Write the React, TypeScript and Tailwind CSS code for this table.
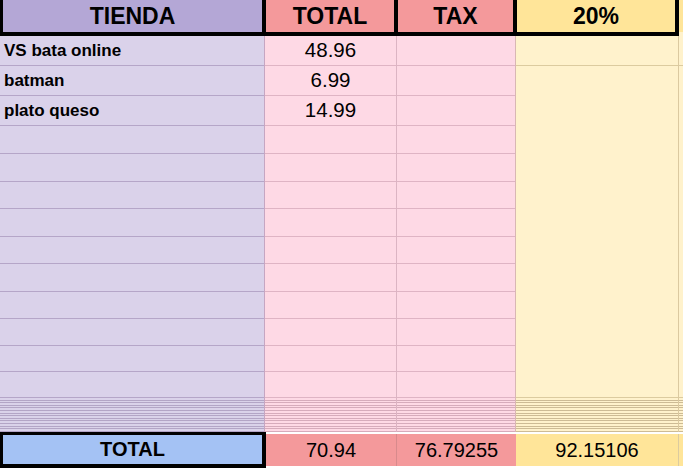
import * as React from "react"

const rowHeights = [30, 30, 30, 28, 28, 27, 28, 27, 28, 27, 27, 26, 26]
const items = [
  { name: "VS bata online", total: "48.96" },
  { name: "batman", total: "6.99" },
  { name: "plato queso", total: "14.99" },
]
const dense = Array.from({ length: 13 }, (_, i) => i)

export default function App() {
  return (
    <div
      className="w-[683px] h-[470px] overflow-hidden bg-white text-black"
      style={{ fontFamily: '"Liberation Sans", Arial, sans-serif' }}
    >
      {/* Header */}
      <div className="flex h-[36px]">
        <div className="flex w-[679px] bg-black pl-[3px] pr-[4px] pb-[4px] gap-[4px]">
          <div className="w-[259px] h-[32px] bg-[#b4a7d6] flex items-center justify-center text-[23px] font-bold">TIENDA</div>
          <div className="w-[128px] h-[32px] bg-[#f4999b] flex items-center justify-center text-[23px] font-bold">TOTAL</div>
          <div className="w-[115px] h-[32px] bg-[#f4999b] flex items-center justify-center text-[23px] font-bold">TAX</div>
          <div className="w-[158px] h-[32px] bg-[#ffe599] flex items-center justify-center text-[23px] font-bold">20%</div>
        </div>
        <div className="flex-1 flex flex-col">
          <div className="h-[32px] bg-[#ffe599]" />
          <div className="h-[4px] bg-[#fff2cc]" />
        </div>
      </div>

      {/* Body */}
      <div className="flex">
        {/* TIENDA column */}
        <div className="w-[265px] flex flex-col bg-[#dad2ea] border-r border-[#c6a6c2]">
          {rowHeights.map((h, i) => (
            <div
              key={i}
              className="border-b border-[#b5a6c8] flex items-center pl-[4px] text-[17px] font-bold"
              style={{ height: h }}
            >
              {items[i]?.name}
            </div>
          ))}
          {dense.map((i) => (
            <div key={i} className="h-[2.6px] border-b border-[#b3a5c6]" />
          ))}
        </div>

        {/* TOTAL column */}
        <div className="w-[132px] flex flex-col bg-[#fed9e5] border-r border-[#dcb4c3]">
          {rowHeights.map((h, i) => (
            <div
              key={i}
              className="border-b border-[#dfb4c4] flex items-center justify-center text-[20.5px]"
              style={{ height: h }}
            >
              {items[i]?.total}
            </div>
          ))}
          {dense.map((i) => (
            <div key={i} className="h-[2.6px] border-b border-[#d6abbb]" />
          ))}
        </div>

        {/* TAX column */}
        <div className="w-[119px] flex flex-col bg-[#fed9e5] border-r border-[#d9b7b3]">
          {rowHeights.map((h, i) => (
            <div key={i} className="border-b border-[#dfb4c4]" style={{ height: h }} />
          ))}
          {dense.map((i) => (
            <div key={i} className="h-[2.6px] border-b border-[#d6abbb]" />
          ))}
        </div>

        {/* 20% column */}
        <div className="w-[163px] flex flex-col bg-[#fff2cc] border-r border-[#dbc9a0]">
          <div className="h-[30px] border-b border-[#dccb9f]" />
          <div className="h-[332px] border-b border-[#dccb9f]" />
          {dense.map((i) => (
            <div key={i} className="h-[2.6px] border-b border-[#cdbb95]" />
          ))}
        </div>

        {/* extra column */}
        <div className="flex-1 flex flex-col bg-[#fff2cc]">
          <div className="h-[30px] border-b border-[#dccb9f]" />
          <div className="h-[332px] border-b border-[#dccb9f]" />
          {dense.map((i) => (
            <div key={i} className="h-[2.6px] border-b border-[#cdbb95]" />
          ))}
        </div>
      </div>

      {/* Total row */}
      <div className="flex h-[36px]">
        <div className="w-[266px] h-[36px] bg-[#a4c2f4] border-black border-t-[3px] border-l-[3px] border-r-[4px] border-b-[4px] flex items-center justify-center text-[20px] font-bold">
          TOTAL
        </div>
        <div className="w-[131px] mt-[2px] h-[32px] bg-[#f4999b] border-r border-[#d88a8c] flex items-center justify-center text-[20px]">
          70.94
        </div>
        <div className="w-[119px] mt-[2px] h-[32px] bg-[#f4999b] flex items-center justify-center text-[20px]">
          76.79255
        </div>
        <div className="w-[163px] mt-[2px] h-[32px] bg-[#ffe599] border-r border-[#dccb9f] flex items-center justify-center text-[20px]">
          92.15106
        </div>
        <div className="flex-1 mt-[2px] h-[32px] bg-[#ffe599]" />
      </div>
    </div>
  )
}
